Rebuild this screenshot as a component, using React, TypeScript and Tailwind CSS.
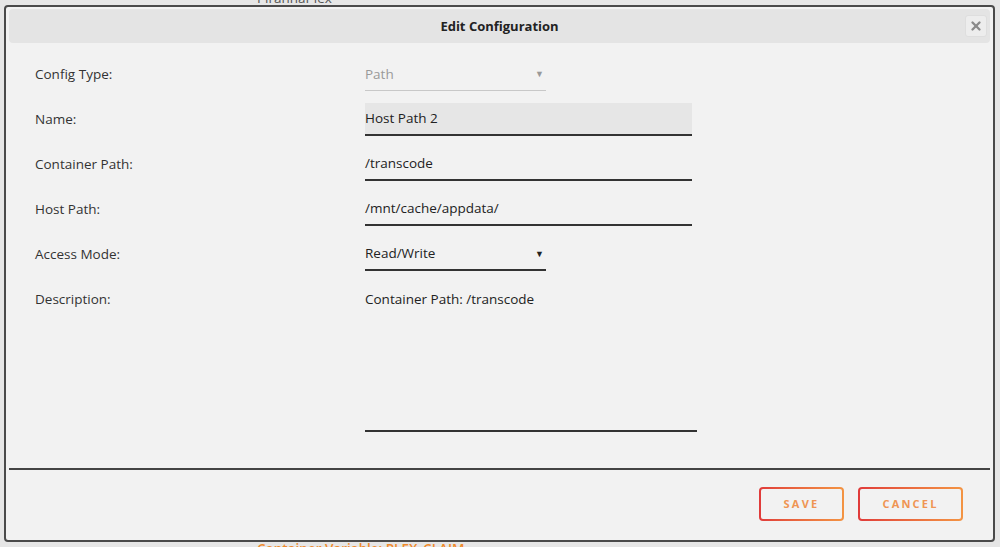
import { X } from "lucide-react";

const rows = [
  { label: "Config Type:", kind: "select", value: "Path", muted: true },
  { label: "Name:", kind: "filled", value: "Host Path 2" },
  { label: "Container Path:", kind: "text", value: "/transcode" },
  { label: "Host Path:", kind: "text", value: "/mnt/cache/appdata/" },
  { label: "Access Mode:", kind: "select", value: "Read/Write" },
];

const Field = ({ kind, value, muted }: { kind: string; value: string; muted?: boolean }) => {
  if (kind === "select") {
    return (
      <div
        className={`flex h-[33px] w-[181px] items-center justify-between pr-[2px] ${
          muted ? "border-b border-[#c8c8c8] text-[#999]" : "border-b-2 border-[#333] text-[#222]"
        }`}
      >
        <span>{value}</span>
        <span className={`text-[9px] ${muted ? "text-[#999]" : "text-[#222]"}`}>▼</span>
      </div>
    );
  }
  return (
    <div
      className={`flex h-[33px] w-[327px] items-center border-b-2 border-[#333] text-[#222] ${
        kind === "filled" ? "bg-[#e6e6e6]" : ""
      }`}
    >
      {value}
    </div>
  );
};

const App = () => {
  return (
    <div className="relative h-[547px] w-full overflow-hidden bg-[#e6e6e6] font-['Open_Sans',sans-serif] text-[13.5px]">
      <div className="-mt-[12px] pl-[257px] text-[#555]">PiranhaPlex</div>
      <div className="absolute bottom-[-12px] left-[257px] font-semibold text-[#f08a2c]">
        Container Variable: PLEX_CLAIM
      </div>

      {/* modal */}
      <div className="absolute top-[5px] left-[4px] flex h-[537px] w-[991px] flex-col rounded-[4px] border-2 border-[#4a4a4a] bg-[#f2f2f2]">
        <header className="relative mx-[3px] mt-[2px] flex h-[34px] items-center justify-center rounded-[4px] bg-[#e4e4e4]">
          <h1 className="pt-[1px] text-[13px] font-bold text-[#222]">Edit Configuration</h1>
          <button className="absolute top-[6px] right-[3px] flex h-[22px] w-[22px] items-center justify-center rounded-[3px] border border-[#dedede] bg-[#ededed]">
            <X size={14} strokeWidth={4} className="text-[#8a8a8a]" />
          </button>
        </header>

        <main className="flex flex-1 flex-col gap-[12px] pt-[15px] pl-[29px]">
          {rows.map((r) => (
            <div key={r.label} className="flex items-center">
              <div className="w-[330px] text-[#333]">{r.label}</div>
              <Field kind={r.kind} value={r.value} muted={r.muted} />
            </div>
          ))}
          <div className="flex">
            <div className="flex h-[33px] w-[330px] items-center text-[#333]">Description:</div>
            <div className="h-[149px] w-[332px] border-b-2 border-[#333]">
              <div className="flex h-[33px] items-center text-[#222]">Container Path: /transcode</div>
            </div>
          </div>
        </main>

        <div className="mx-[3px] mb-[17px] border-t-2 border-[#444]" />

        <footer className="flex justify-end gap-[14px] pr-[30px] pb-[19px]">
          <button className="rounded-[4px] bg-gradient-to-r from-[#e03a3a] to-[#f39443] p-[2px]">
            <span className="flex h-[30px] w-[81px] items-center justify-center rounded-[2px] bg-[#f2f2f2] text-[11px] font-bold tracking-[0.2em] text-[#ef9553]">
              SAVE
            </span>
          </button>
          <button className="rounded-[4px] bg-gradient-to-r from-[#e03a3a] to-[#f39443] p-[2px]">
            <span className="flex h-[30px] w-[101px] items-center justify-center rounded-[2px] bg-[#f2f2f2] text-[11px] font-bold tracking-[0.2em] text-[#ef9553]">
              CANCEL
            </span>
          </button>
        </footer>
      </div>
    </div>
  );
};

export default App;
